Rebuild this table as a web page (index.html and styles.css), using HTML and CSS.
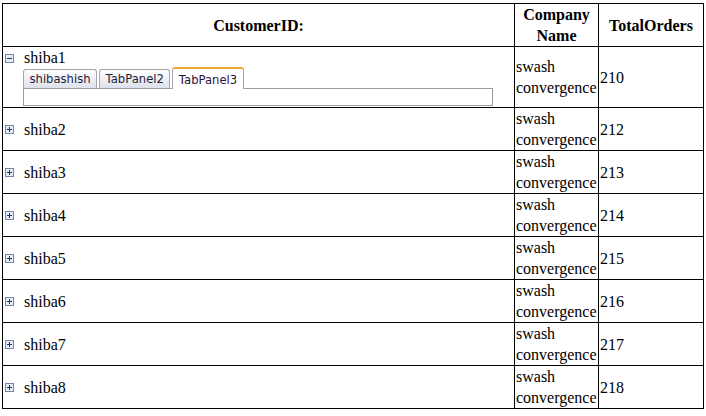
FILE: index.html
```html
<!DOCTYPE html>
<html>
<head>
<meta charset="utf-8">
<link rel="stylesheet" href="styles.css">
</head>
<body>
<table class="grid">
  <colgroup><col class="w1"><col class="w2"><col class="w3"></colgroup>
  <thead>
    <tr><th>CustomerID:</th><th>Company Name</th><th>TotalOrders</th></tr>
  </thead>
  <tbody>
    <tr>
      <td class="cust open">
        <div class="line"><svg class="tog" width="9" height="9" viewBox="0 0 9 9"><rect x="0.5" y="0.5" width="8" height="8" fill="#e6ecf7" stroke="#7487ac"/><path d="M2 4.5h5" stroke="#173775"/></svg>shiba1</div>
        <div class="tabs">
          <div class="strip">
            <span class="tab">shibashish</span>
            <span class="tab">TabPanel2</span>
            <span class="tab active">TabPanel3</span>
          </div>
          <div class="panel"></div>
        </div>
      </td>
      <td>swash convergence</td><td>210</td>
    </tr>
    <tr><td class="cust"><svg class="tog" width="9" height="9" viewBox="0 0 9 9"><rect x="0.5" y="0.5" width="8" height="8" fill="#e6ecf7" stroke="#7487ac"/><path d="M2 4.5h5M4.5 2v5" stroke="#173775"/></svg>shiba2</td><td>swash convergence</td><td>212</td></tr>
    <tr><td class="cust"><svg class="tog" width="9" height="9" viewBox="0 0 9 9"><rect x="0.5" y="0.5" width="8" height="8" fill="#e6ecf7" stroke="#7487ac"/><path d="M2 4.5h5M4.5 2v5" stroke="#173775"/></svg>shiba3</td><td>swash convergence</td><td>213</td></tr>
    <tr><td class="cust"><svg class="tog" width="9" height="9" viewBox="0 0 9 9"><rect x="0.5" y="0.5" width="8" height="8" fill="#e6ecf7" stroke="#7487ac"/><path d="M2 4.5h5M4.5 2v5" stroke="#173775"/></svg>shiba4</td><td>swash convergence</td><td>214</td></tr>
    <tr><td class="cust"><svg class="tog" width="9" height="9" viewBox="0 0 9 9"><rect x="0.5" y="0.5" width="8" height="8" fill="#e6ecf7" stroke="#7487ac"/><path d="M2 4.5h5M4.5 2v5" stroke="#173775"/></svg>shiba5</td><td>swash convergence</td><td>215</td></tr>
    <tr><td class="cust"><svg class="tog" width="9" height="9" viewBox="0 0 9 9"><rect x="0.5" y="0.5" width="8" height="8" fill="#e6ecf7" stroke="#7487ac"/><path d="M2 4.5h5M4.5 2v5" stroke="#173775"/></svg>shiba6</td><td>swash convergence</td><td>216</td></tr>
    <tr><td class="cust"><svg class="tog" width="9" height="9" viewBox="0 0 9 9"><rect x="0.5" y="0.5" width="8" height="8" fill="#e6ecf7" stroke="#7487ac"/><path d="M2 4.5h5M4.5 2v5" stroke="#173775"/></svg>shiba7</td><td>swash convergence</td><td>217</td></tr>
    <tr><td class="cust"><svg class="tog" width="9" height="9" viewBox="0 0 9 9"><rect x="0.5" y="0.5" width="8" height="8" fill="#e6ecf7" stroke="#7487ac"/><path d="M2 4.5h5M4.5 2v5" stroke="#173775"/></svg>shiba8</td><td>swash convergence</td><td>218</td></tr>
  </tbody>
</table>
</body>
</html>
```
FILE: styles.css
```css
html, body {
  background: #fff;
}
body {
  margin: 3px 0 0 2px;
  font-family: "Liberation Serif", "Times New Roman", serif;
  font-size: 16px;
  color: #000;
}
.grid {
  border-collapse: collapse;
  table-layout: fixed;
  width: 701px;
}
.w1 { width: 512px; }
.w2 { width: 84px; }
.w3 { width: 105px; }
.grid th, .grid td {
  border: 1px solid #000;
  padding: 0 1px;
  line-height: 21px;
  vertical-align: middle;
  text-align: left;
}
.grid th {
  text-align: center;
  font-weight: bold;
}
.grid td.cust {
  padding-left: 2px;
}
.grid td.open {
  vertical-align: top;
  padding-bottom: 1px;
}
.tog {
  vertical-align: middle;
  margin-right: 10px;
  position: relative;
  top: -1px;
}
.line {
  height: 21px;
}
.tabs {
  margin-left: 18px;
  width: 470px;
}
.strip {
  display: flex;
  align-items: flex-end;
  gap: 2px;
  height: 20px;
  font-family: "DejaVu Sans", Tahoma, Verdana, sans-serif;
  font-size: 11.6px;
  line-height: 17px;
}
.tab {
  box-sizing: border-box;
  height: 19px;
  padding: 1px 5.5px 0;
  border: 1px solid #a3a6ad;
  border-bottom: none;
  border-radius: 3px 3px 0 0;
  background: linear-gradient(#ffffff, #f1f2f6 45%, #dde0ea);
  color: #1c1c3c;
}
.tab.active {
  position: relative;
  z-index: 1;
  height: 22px;
  margin-bottom: -1px;
  padding-top: 3px;
  border-top: 2px solid #f2a62c;
  background: #fff;
  color: #2b0f3d;
}
.panel {
  box-sizing: border-box;
  height: 18px;
  border: 1px solid #9a9ea3;
}
```
